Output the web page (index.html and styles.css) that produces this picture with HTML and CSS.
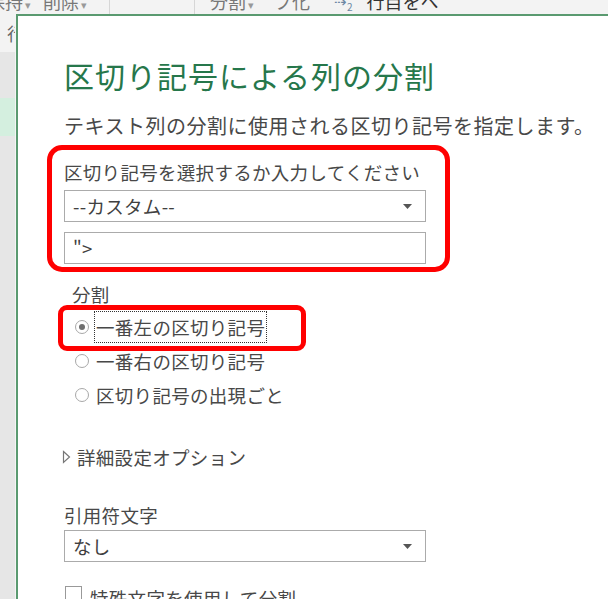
FILE: index.html
```html
<!DOCTYPE html>
<html lang="ja">
<head>
    <meta charset="UTF-8">
    <meta name="viewport" content="width=device-width, initial-scale=1.0">
    <title>区切り記号による列の分割</title>
    <link rel="stylesheet" href="styles.css">
</head>
<body>
    <div class="ribbon">
        <div class="ribbon-row">
            <span class="rb rb-keep">保持<i class="caret">▾</i></span>
            <span class="rb rb-del">削除<i class="caret">▾</i></span>
            <span class="rb-sep"></span>
            <span class="rb-sep rb-sep2"></span>
            <span class="rb rb-split">分割<i class="caret">▾</i></span>
            <span class="rb rb-group">プ化</span>
            <span class="rb rb-icon">⇢<sub>2</sub></span>
            <span class="rb rb-dark">行目をヘ</span>
        </div>
    </div>

    <div class="main">
        <div class="sidebar">
            <div class="band band-top"><span>行</span></div>
            <div class="band band-gray"></div>
            <div class="band band-green"></div>
            <div class="band band-rest"></div>
        </div>

        <div class="dialog">
            <h1 class="title">区切り記号による列の分割</h1>
            <p class="subtitle">テキスト列の分割に使用される区切り記号を指定します。</p>

            <div class="group">
                <div class="label">区切り記号を選択するか入力してください</div>
                <div class="select">
                    <span>--カスタム--</span>
                    <svg class="arrow" width="9" height="5" viewBox="0 0 9 5"><polygon points="0,0 9,0 4.5,5" fill="#555"/></svg>
                </div>
                <div class="input">"&gt;</div>
            </div>

            <div class="label section-label">分割</div>
            <div class="radios">
                <div class="radio">
                    <span class="circle checked"></span>
                    <span class="focus">一番左の区切り記号</span>
                    <span class="mark"></span>
                </div>
                <div class="radio">
                    <span class="circle"></span>
                    <span class="text">一番右の区切り記号</span>
                </div>
                <div class="radio">
                    <span class="circle"></span>
                    <span class="text">区切り記号の出現ごと</span>
                </div>
            </div>

            <div class="label advanced">
                <svg class="tri" width="9" height="14" viewBox="0 0 9 14"><polygon points="1.5,1.5 7.5,7 1.5,12.5" fill="none" stroke="#777" stroke-width="1.2"/></svg>
                <span>詳細設定オプション</span>
            </div>

            <div class="label quote-label">引用符文字</div>
            <div class="select select-quote">
                <span>なし</span>
                <svg class="arrow" width="9" height="5" viewBox="0 0 9 5"><polygon points="0,0 9,0 4.5,5" fill="#555"/></svg>
            </div>

            <div class="label check-row">
                <span class="box"></span>
                <span>特殊文字を使用して分割</span>
            </div>
        </div>
    </div>
</body>
</html>
```

FILE: styles.css
```css
body {
    margin: 0;
    height: 599px;
    overflow: hidden;
    font-family: "Noto Sans CJK JP", "Noto Sans", sans-serif;
    color: #484848;
    background: #e6e6e6;
    display: flex;
    flex-direction: column;
}

.ribbon {
    height: 14px;
    overflow: hidden;
    background: #f3f3f3;
}

.ribbon-row {
    display: flex;
    align-items: flex-start;
    margin-top: -10px;
    font-size: 18px;
    line-height: 22px;
    color: #777;
    white-space: nowrap;
}

.caret {
    font-style: normal;
    font-size: 11px;
    color: #999;
    margin-left: 2px;
}

.rb-keep {
    margin-left: -13px;
}

.rb-del {
    margin-left: 12px;
}

.rb-sep {
    width: 1px;
    height: 30px;
    background: #d6d6d6;
    margin-left: 22px;
}

.rb-sep2 {
    margin-left: 84px;
}

.rb-split {
    margin-left: 15px;
}

.rb-group {
    margin-left: 20px;
}

.rb-icon {
    margin-left: 24px;
    font-size: 15px;
    color: #6d87a3;
}

.rb-icon sub {
    font-size: 10px;
}

.rb-dark {
    margin-left: 14px;
    color: #333;
}

.main {
    flex: 1;
    display: flex;
    min-height: 0;
}

.sidebar {
    width: 15px;
    display: flex;
    flex-direction: column;
    border-right: 1px solid #f4f4f4;
}

.band {
    overflow: hidden;
}

.band-top {
    height: 38px;
    background: #f3f3f3;
    font-size: 18px;
    line-height: 38px;
    color: #666;
}

.band-top span {
    margin-left: 7px;
}

.band-gray {
    height: 46px;
    background: #e6e6e6;
}

.band-green {
    height: 38px;
    background: #d4efdf;
}

.band-rest {
    flex: 1;
    background: #e6e6e6;
}

.dialog {
    flex: 1;
    background: #fff;
    border-top: 2px solid #5a9a70;
    border-left: 2px solid #5a9a70;
    padding: 41px 0 0 46px;
    overflow: hidden;
}

.title {
    margin: 0;
    font-size: 30px;
    line-height: 36px;
    font-weight: 400;
    letter-spacing: 1px;
    color: #26774b;
}

.subtitle {
    margin: 19px 0 0;
    font-size: 20px;
    line-height: 28px;
    letter-spacing: 0.5px;
    white-space: nowrap;
}

.label {
    font-size: 18.5px;
    line-height: 26px;
    letter-spacing: 0.3px;
    white-space: nowrap;
}

.group {
    margin: 5px 0 0 -17px;
    width: 403px;
    box-sizing: border-box;
    border: 5px solid #ff0000;
    border-radius: 15px;
    padding: 9px 19px 3px 12px;
}

.select,
.input {
    width: 362px;
    height: 32px;
    box-sizing: border-box;
    border: 1px solid #ababab;
    background: #fff;
    display: flex;
    align-items: center;
    justify-content: space-between;
    padding: 0 13px 0 8px;
    font-size: 18.5px;
    letter-spacing: 0.3px;
    color: #404040;
}

.group .select {
    margin-top: 5px;
}

.input {
    margin-top: 10px;
    justify-content: flex-start;
}

.arrow {
    display: block;
}

.section-label {
    margin-top: 9px;
    padding-left: 8px;
}

.radios {
    margin-top: 3px;
}

.radio {
    position: relative;
    height: 34px;
    display: flex;
    align-items: center;
    padding-left: 11px;
    font-size: 18.5px;
    letter-spacing: 0.3px;
    white-space: nowrap;
}

.circle {
    width: 14px;
    height: 14px;
    box-sizing: border-box;
    border: 1px solid #a8a8a8;
    border-radius: 50%;
    margin-right: 5px;
    display: flex;
    align-items: center;
    justify-content: center;
}

.circle.checked::after {
    content: "";
    width: 6px;
    height: 6px;
    border-radius: 50%;
    background: #6e6e6e;
}

.text {
    padding-left: 2px;
}

.focus {
    border: 1px dotted #333;
    padding: 0 1px;
    line-height: 30px;
}

.mark {
    position: absolute;
    left: -6px;
    top: -5px;
    width: 248px;
    height: 46px;
    box-sizing: border-box;
    border: 5px solid #ff0000;
    border-radius: 9px;
}

.advanced {
    margin-top: 32px;
    display: flex;
    align-items: center;
}

.tri {
    margin-left: -2px;
    margin-right: 6px;
}

.quote-label {
    margin-top: 32px;
}

.select-quote {
    margin-top: 2px;
}

.check-row {
    margin-top: 23px;
    display: flex;
    align-items: flex-start;
}

.box {
    width: 17px;
    height: 17px;
    box-sizing: border-box;
    border: 1px solid #999;
    margin: 1px 8px 0 1px;
}
```
